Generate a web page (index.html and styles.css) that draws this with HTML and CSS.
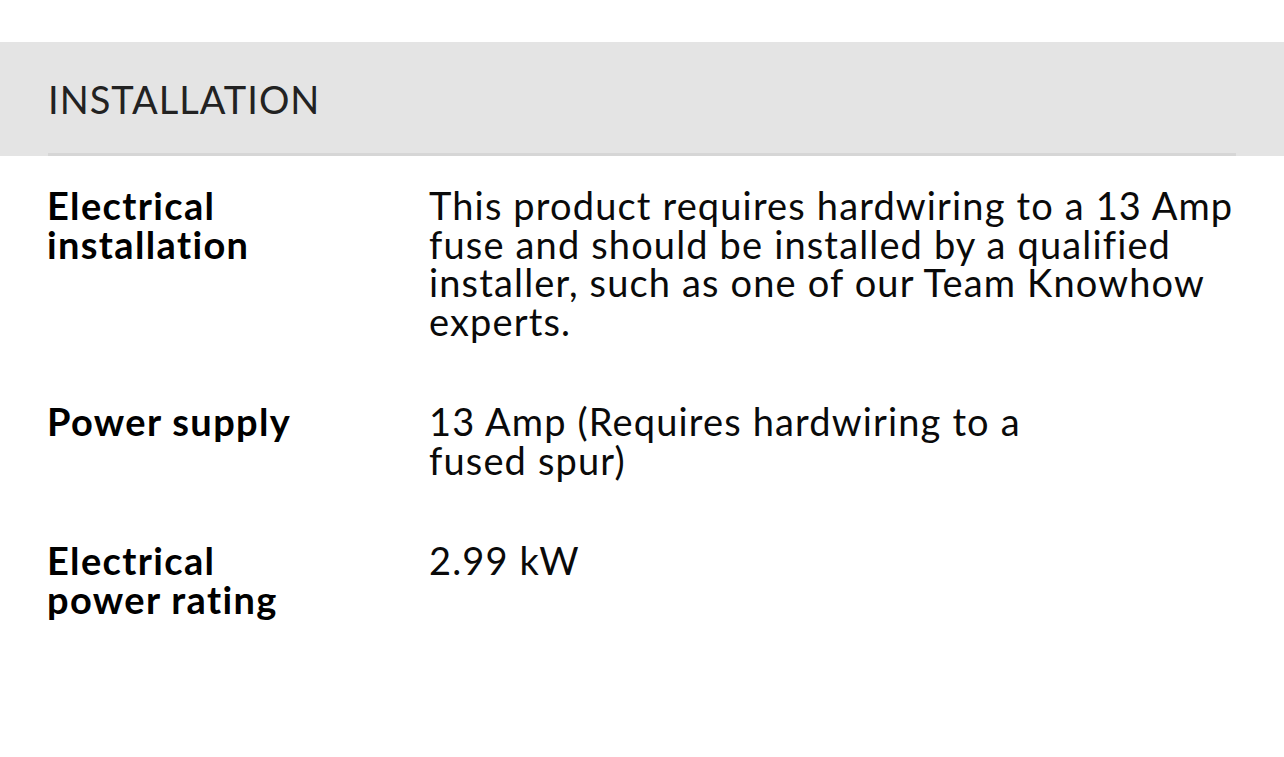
FILE: index.html
```html
<!DOCTYPE html>
<html lang="en">
<head>
<meta charset="utf-8">
<title>Installation</title>
<link rel="stylesheet" href="styles.css">
</head>
<body>
<section class="spec">
  <div class="spec-head">
    <h2 class="spec-title">INSTALLATION</h2>
  </div>
  <dl class="spec-list">
    <div class="spec-row">
      <dt class="spec-label">Electrical installation</dt>
      <dd class="spec-value">This product requires hardwiring to a 13 Amp fuse and should be installed by a qualified installer, such as one of our Team Knowhow experts.</dd>
    </div>
    <div class="spec-row">
      <dt class="spec-label">Power supply</dt>
      <dd class="spec-value spec-value--narrow">13 Amp (Requires hardwiring to a fused spur)</dd>
    </div>
    <div class="spec-row">
      <dt class="spec-label">Electrical power rating</dt>
      <dd class="spec-value">2.99 kW</dd>
    </div>
  </dl>
</section>
</body>
</html>
```
FILE: styles.css
```css
* { box-sizing: border-box; }
html, body { margin: 0; padding: 0; background: #ffffff; }
body {
  font-family: "Lato", "Roboto", "Liberation Sans", sans-serif;
  color: #000;
  width: 1284px;
  height: 757px;
  overflow: hidden;
}
.spec { padding-top: 42px; }
.spec-head {
  background: #e4e4e4;
  padding: 0 48px;
}
.spec-title {
  margin: 0;
  padding: 38px 0 35px;
  font-size: 38px;
  line-height: 38px;
  font-weight: 400;
  letter-spacing: 1px;
  color: #222;
  border-bottom: 3px solid #d6d6d6;
}
.spec-list {
  margin: 0;
  padding: 0 30px 0 47px;
}
.spec-row {
  display: grid;
  grid-template-columns: 382px 1fr;
  padding: 30px 0 32px;
  font-size: 38px;
  line-height: 38.5px;
}
.spec-label {
  margin: 0;
  max-width: 262px;
  font-weight: 700;
  letter-spacing: 1.35px;
  color: #000;
}
.spec-value {
  margin: 0;
  font-weight: 400;
  letter-spacing: 1.15px;
  color: #0a0a0a;
}
.spec-value--narrow {
  max-width: 640px;
}
```
